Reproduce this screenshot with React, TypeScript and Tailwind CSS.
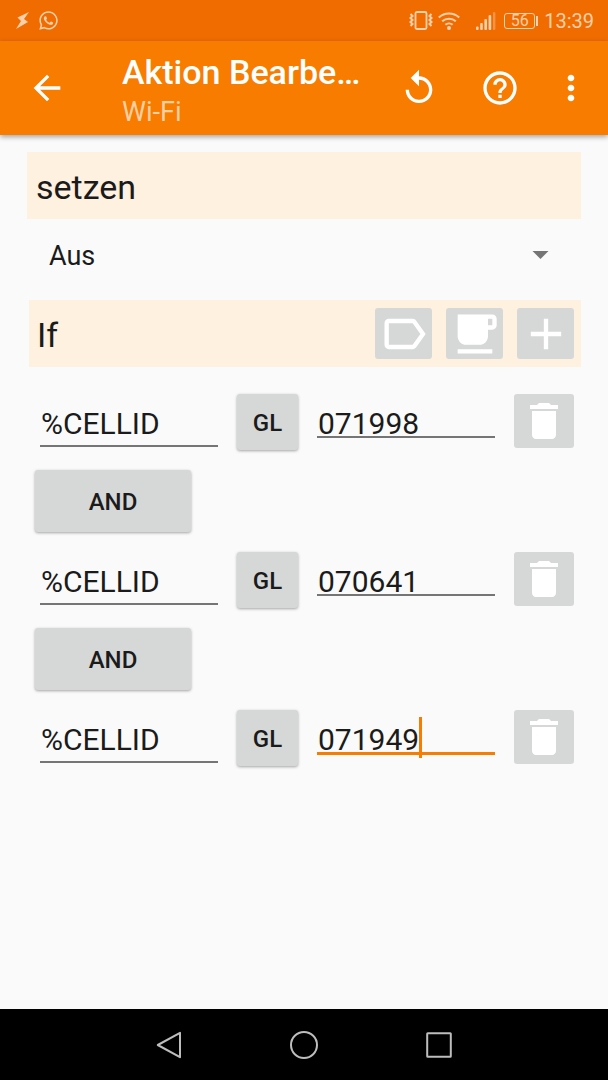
import { useState } from 'react';
import { FaWhatsapp } from 'react-icons/fa';

type Condition = { id: number; name: string; op: string; value: string };

const initialConditions: Condition[] = [
  { id: 1, name: '%CELLID', op: 'GL', value: '071998' },
  { id: 2, name: '%CELLID', op: 'GL', value: '070641' },
  { id: 3, name: '%CELLID', op: 'GL', value: '071949' }
];

const DIGIT_WIDTH = 17;

const icons = {
  back: 'M20 11H7.83l5.59-5.59L12 4l-8 8 8 8 1.41-1.41L7.83 13H20v-2z',
  replay: 'M12 5V1L7 6l5 5V7c3.31 0 6 2.69 6 6s-2.69 6-6 6-6-2.69-6-6H4c0 4.42 3.58 8 8 8s8-3.58 8-8-3.58-8-8-8z',
  help: 'M11 18h2v-2h-2v2zm1-16C6.48 2 2 6.48 2 12s4.48 10 10 10 10-4.48 10-10S17.52 2 12 2zm0 18c-4.41 0-8-3.59-8-8s3.59-8 8-8 8 3.59 8 8-3.59 8-8 8zm0-14c-2.21 0-4 1.79-4 4h2c0-1.1.9-2 2-2s2 .9 2 2c0 2-3 1.75-3 5h2c0-2.25 3-2.5 3-5 0-2.21-1.79-4-4-4z',
  more: 'M12 8c1.1 0 2-.9 2-2s-.9-2-2-2-2 .9-2 2 .9 2 2 2zm0 2c-1.1 0-2 .9-2 2s.9 2 2 2 2-.9 2-2-.9-2-2-2zm0 6c-1.1 0-2 .9-2 2s.9 2 2 2 2-.9 2-2-.9-2-2-2z',
  label: 'M17.63 5.84C17.27 5.33 16.67 5 16 5L5 5.01C3.9 5.01 3 5.9 3 7v10c0 1.1.9 1.99 2 1.99L16 19c.67 0 1.27-.33 1.63-.84L22 12l-4.37-6.16zM16 17H5V7h11l3.55 5L16 17z',
  cup: 'M20 3H4v10c0 2.21 1.79 4 4 4h6c2.21 0 4-1.79 4-4v-3h2c1.11 0 2-.9 2-2V5c0-1.11-.89-2-2-2zm0 5h-2V5h2v3zM4 19h16v2H4z',
  add: 'M19 13h-6v6h-2v-6H5v-2h6V5h2v6h6v2z',
  trash: 'M6 19c0 1.1.9 2 2 2h8c1.1 0 2-.9 2-2V7H6v12zM19 4h-3.5l-1-1h-5l-1 1H5v2h14V4z'
};

export default function App() {
  const [mode, setMode] = useState('Aus');
  const [conditions, setConditions] = useState(initialConditions);
  const [activeId, setActiveId] = useState(3);

  const update = (id: number, patch: Partial<Condition>) => {
    setConditions((prev) => prev.map((c) => (c.id === id ? { ...c, ...patch } : c)));
  };

  const remove = (id: number) => setConditions((prev) => prev.filter((c) => c.id !== id));

  const add = () => {
    setConditions((prev) => [...prev, { id: Math.max(0, ...prev.map((c) => c.id)) + 1, name: '', op: 'GL', value: '' }]);
  };

  return (
    <div className="flex min-h-screen flex-col bg-[#fafafa] font-['Roboto',sans-serif] text-[#1b1b1b]">
      <StatusBar />

      <header className="z-10 flex h-[94px] items-center bg-[#f77c00] pr-[17px] pl-[27px] text-white shadow-[0_2px_5px_rgba(0,0,0,0.35)]">
        <button type="button" aria-label="Zurück" className="shrink-0">
          <Icon path={icons.back} className="size-10" />
        </button>
        <div className="ml-[55px] min-w-0 flex-1 pt-2">
          <h1 className="truncate text-[34px] leading-10 font-medium">Aktion Bearbe…</h1>
          <p className="text-[27px] leading-10 text-[#fdd0a3]">Wi-Fi</p>
        </div>
        <button type="button" aria-label="Rückgängig" className="shrink-0">
          <Icon path={icons.replay} className="size-10" />
        </button>
        <button type="button" aria-label="Hilfe" className="ml-[41px] shrink-0">
          <Icon path={icons.help} className="size-10" />
        </button>
        <button type="button" aria-label="Mehr" className="ml-[31px] shrink-0">
          <Icon path={icons.more} className="size-10" />
        </button>
      </header>

      <main className="flex-1 px-[27px] pt-[17px]">
        <h2 className="flex h-[67px] items-center bg-[#fff1df] pt-[3px] pl-[9px] text-[34px]">
          <label htmlFor="mode">setzen</label>
        </h2>

        <div className="relative mb-[7px]">
          <select
            id="mode"
            value={mode}
            onChange={(e) => setMode(e.target.value)}
            className="h-[74px] w-full appearance-none bg-transparent pl-[22px] text-[27px] outline-none"
          >
            <option>Aus</option>
            <option>An</option>
            <option>Umschalten</option>
          </select>
          <svg viewBox="0 0 10 5" className="pointer-events-none absolute top-8 right-8 h-2 w-[17px] fill-[#757575]">
            <path d="M0 0h10L5 5z" />
          </svg>
        </div>

        <div className="ml-0.5 flex h-[67px] items-center gap-[14px] bg-[#fff1df] pr-[7px] pl-2">
          <h2 className="flex-1 pt-[3px] text-[34px]">If</h2>
          <IconButton label="Label" path={icons.label} className="h-[51px] w-[57px]" />
          <IconButton label="Pause" path={icons.cup} className="h-[51px] w-[57px]" />
          <IconButton label="Hinzufügen" path={icons.add} className="h-[51px] w-[57px]" onClick={add} />
        </div>

        <div className="mt-[27px] flex flex-col gap-5 pr-[7px] pl-2">
          {conditions.map((c, idx) => (
            <div key={c.id} className="flex flex-col gap-5">
              {idx > 0 && <TextButton className="h-[62px] w-[156px] pt-0.5">AND</TextButton>}
              <div className="grid grid-cols-[1fr_61px_1fr_60px] gap-x-[19px] pl-[5px]">
                <div className="h-[53px] border-b-2 border-[#757575] pt-[11px]">
                  <input
                    aria-label="Variable"
                    value={c.name}
                    onChange={(e) => update(c.id, { name: e.target.value })}
                    className="block h-9 w-full bg-transparent pl-px text-[30px] outline-none"
                  />
                </div>
                <TextButton className="h-14 pt-0.5">{c.op}</TextButton>
                <div className="relative pt-[11px]">
                  <input
                    aria-label="Wert"
                    value={c.value}
                    onFocus={() => setActiveId(c.id)}
                    onChange={(e) => update(c.id, { value: e.target.value })}
                    className="block h-9 w-full bg-transparent pl-px text-[30px] caret-transparent outline-none"
                  />
                  {/* the line runs right under the digits, over the input's own box */}
                  <span className={`absolute inset-x-0 top-[42px] ${c.id === activeId ? 'h-[3px] bg-[#f77c00]' : 'h-0.5 bg-[#757575]'}`} />
                  {c.id === activeId && (
                    <span className="absolute top-[7px] h-[41px] w-[3px] bg-[#f77c00]" style={{ left: c.value.length * DIGIT_WIDTH }} />
                  )}
                </div>
                <IconButton label="Löschen" path={icons.trash} className="h-[54px]" iconClassName="size-12" onClick={() => remove(c.id)} />
              </div>
            </div>
          ))}
        </div>
      </main>

      <NavBar />
    </div>
  );
}

function Icon({ path, className }: { path: string; className?: string }) {
  return (
    <svg viewBox="0 0 24 24" fill="currentColor" className={className}>
      <path d={path} />
    </svg>
  );
}

function IconButton({ label, path, className, iconClassName = 'size-[52px]', onClick }: { label: string; path: string; className: string; iconClassName?: string; onClick?: () => void }) {
  return (
    <button
      type="button"
      aria-label={label}
      onClick={onClick}
      className={`flex shrink-0 items-center justify-center rounded-[3px] bg-[#d6d8d7] text-white ${className}`}
    >
      <Icon path={path} className={`shrink-0 ${iconClassName}`} />
    </button>
  );
}

function TextButton({ children, className }: { children: string; className: string }) {
  return (
    <button type="button" className={`rounded-[3px] bg-[#d6d8d7] text-[24px] font-medium shadow-[0_1px_3px_rgba(0,0,0,0.35)] ${className}`}>
      {children}
    </button>
  );
}

function StatusBar() {
  return (
    <div className="flex h-[41px] items-center bg-[#f06c00] pr-[14px] pl-4 text-[#fbd0aa]">
      <svg viewBox="0 0 14 17" fill="currentColor" className="h-[17px] w-[14px]">
        <path d="M13 0 1.5 5.5 5 9 0 17l12-7-4-3z" />
      </svg>
      <FaWhatsapp className="ml-2 size-[21px]" />
      <div className="flex-1" />
      <svg viewBox="0 0 24 19" fill="none" stroke="currentColor" className="h-[19px] w-6">
        <rect x="6.5" y="1" width="11" height="17" rx="1.5" strokeWidth="1.8" />
        <path d="M1.5 3l2 2-2 2 2 2-2 2 2 2-2 2M22.5 3l-2 2 2 2-2 2 2 2-2 2 2 2" strokeWidth="2" />
      </svg>
      <svg viewBox="0 0 22 18" fill="none" stroke="currentColor" strokeWidth="2" className="ml-[5px] h-[18px] w-[22px]">
        <path d="M.8 5.5a15 15 0 0 1 20.4 0M4.2 9.3a10 10 0 0 1 13.6 0M7.4 12.8a5.4 5.4 0 0 1 7.2 0" />
        <circle cx="11" cy="16" r="2" fill="currentColor" stroke="none" />
      </svg>
      <svg viewBox="0 0 20 18" fill="currentColor" className="ml-4 h-[18px] w-5">
        <rect x="0" y="14.5" width="2.6" height="3.5" rx="1" />
        <rect x="4.2" y="11" width="2.6" height="7" rx="1" />
        <rect x="8.4" y="7" width="2.6" height="11" rx="1" />
        <rect x="12.6" y="3" width="2.6" height="15" rx="1" />
        <rect x="17" y="0" width="2.4" height="18" rx="1" opacity=".4" />
      </svg>
      <div className="ml-2 flex h-4 w-[31px] items-center justify-center rounded-[3px] border border-current text-[16px]">56</div>
      <div className="ml-px h-[10px] w-0.5 bg-current" />
      <time className="ml-[6px] text-[20px]">13:39</time>
    </div>
  );
}

function NavBar() {
  return (
    <nav className="flex h-[71px] justify-center bg-black">
      <button type="button" aria-label="Zurück" className="flex w-[135px] items-center justify-center">
        <NavIcon>
          <path d="M2.8 14 25 1.8v24.4z" />
        </NavIcon>
      </button>
      <button type="button" aria-label="Startseite" className="flex w-[135px] items-center justify-center">
        <NavIcon>
          <circle cx="14" cy="14" r="13" />
        </NavIcon>
      </button>
      <button type="button" aria-label="Übersicht" className="flex w-[135px] items-center justify-center">
        <NavIcon>
          <rect x="2.2" y="2.2" width="23.6" height="23.6" rx=".5" />
        </NavIcon>
      </button>
    </nav>
  );
}

function NavIcon({ children }: { children: React.ReactNode }) {
  return (
    <svg viewBox="0 0 28 28" fill="none" stroke="#bdbdbd" strokeWidth="2" strokeLinejoin="round" className="size-7">
      {children}
    </svg>
  );
}
